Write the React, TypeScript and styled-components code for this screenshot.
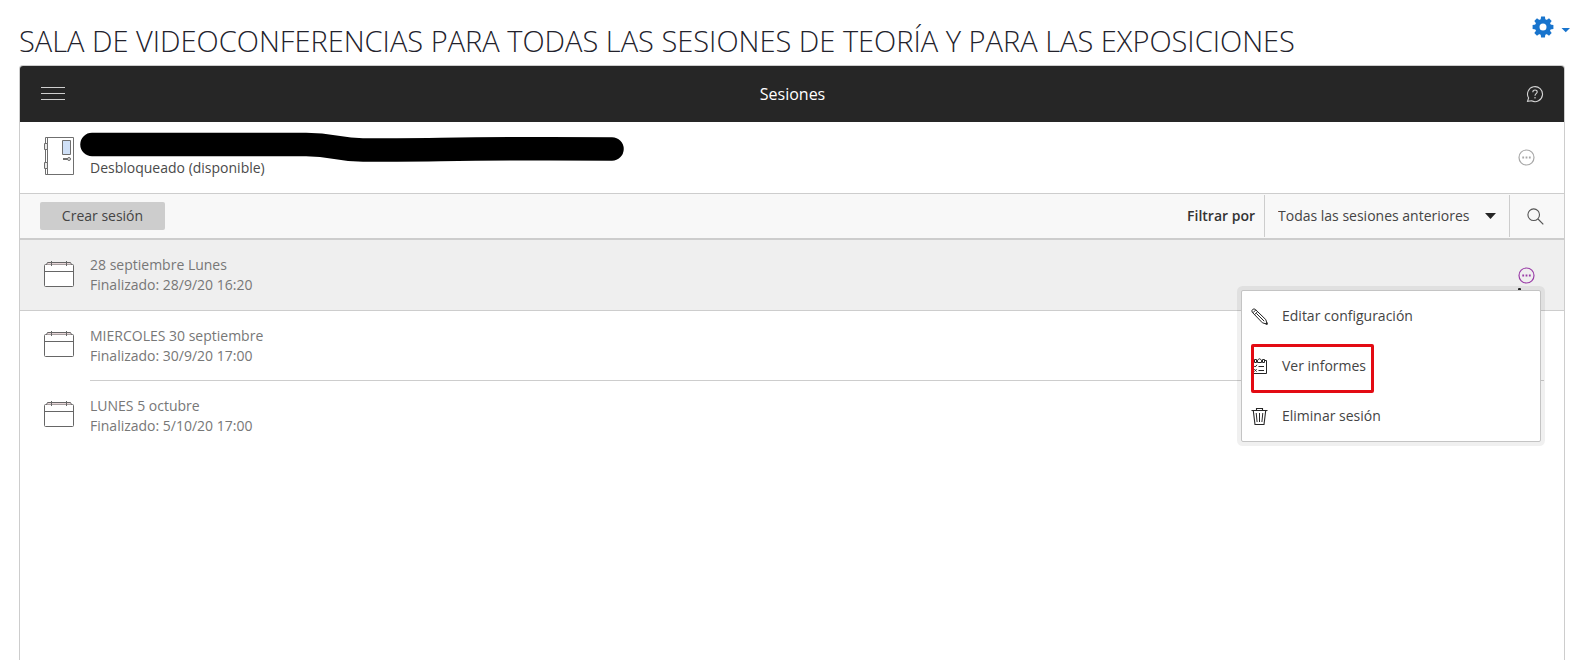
import React from "react";
import styled, { createGlobalStyle } from "styled-components";

const GlobalStyle = createGlobalStyle`
  * { box-sizing: border-box; }
  body {
    margin: 0;
    background: #fff;
    color: #262626;
    font: 14px/20px "Open Sans", "Noto Sans", sans-serif;
  }
  button, select { font: inherit; color: inherit; }
  svg { display: block; }
`;

const Page = styled.div`
  display: flex;
  flex-direction: column;
  min-height: 100vh;
`;

const PageHeader = styled.header`
  display: flex;
  justify-content: space-between;
  align-items: flex-start;
  padding: 16px 12px 4px 19px;
`;

const PageTitle = styled.h1`
  margin: 0;
  padding-top: 5px;
  font-size: 29px;
  line-height: 40px;
  font-weight: 300;
  color: #22222c;
`;

const IconButton = styled.button<{ $color?: string }>`
  display: flex;
  align-items: center;
  padding: 0;
  border: 0;
  background: none;
  color: ${(p) => p.$color || "#262626"};
  cursor: pointer;
`;

const Frame = styled.main`
  flex: 1;
  margin: 0 17px 0 19px;
  border: 1px solid #cdcdcd;
  border-bottom: 0;
  border-radius: 4px 4px 0 0;
`;

const TopBar = styled.div`
  display: grid;
  grid-template-columns: 1fr auto 1fr;
  align-items: center;
  height: 56px;
  padding: 0 20px 0 21px;
  border-radius: 3px 3px 0 0;
  background: #262626;
`;

const BarTitle = styled.h2`
  margin: 0;
  font-size: 16px;
  line-height: 24px;
  font-weight: 400;
  color: #fff;
`;

const EndButton = styled(IconButton)`
  justify-self: end;
`;

const Row = styled.div<{ $active?: boolean }>`
  display: flex;
  align-items: center;
  height: ${(p) => (p.$active ? 70 : 69)}px;
  padding: 0 29px 0 24px;
  background: ${(p) => (p.$active ? "#efefef" : "#fff")};
`;

const RoomRow = styled(Row)`
  height: 72px;
  border-bottom: 1px solid #cdcdcd;
`;

const RowIcon = styled.span`
  flex: none;
  width: 46px;
  padding-bottom: 3px;
`;

const RowText = styled.div<{ $muted?: boolean }>`
  flex: 1;
  color: ${(p) => (p.$muted ? "#777" : "#4a4a4a")};
`;

const RowLine = styled.p`
  margin: 0;
`;

const RoomText = styled(RowText)`
  align-self: flex-start;
  padding-top: 10px;
`;

const Redaction = styled.svg`
  width: 544px;
  height: 30px;
  margin: 0 0 -4px -10px;
`;

const Toolbar = styled.div`
  display: flex;
  align-items: center;
  height: 46px;
  padding-left: 20px;
  border-bottom: 2px solid #cdcdcd;
  background: #f8f8f8;
`;

const CreateButton = styled.button`
  height: 28px;
  width: 125px;
  margin-right: auto;
  padding: 0;
  border: 0;
  border-radius: 2px;
  background: #cdcdcd;
  color: #444;
  cursor: pointer;
`;

const FilterLabel = styled.label`
  margin-right: 9px;
  font-weight: 600;
  color: #333;
`;

const FilterBox = styled.span`
  display: flex;
  align-items: center;
  height: 42px;
  padding: 0 13px;
  border: solid #cdcdcd;
  border-width: 0 1px;
`;

const FilterSelect = styled.select`
  appearance: none;
  width: 207px;
  padding: 0;
  border: 0;
  background: none;
  color: #444;
`;

const SearchButton = styled(IconButton)`
  width: 54px;
  padding-left: 17px;
`;

const SessionList = styled.ul`
  margin: 0;
  padding: 0;
  list-style: none;
`;

const Session = styled.li<{ $divider: "full" | "inset" | "none" }>`
  position: relative;
  &::after {
    content: "";
    display: ${(p) => (p.$divider === "none" ? "none" : "block")};
    height: 1px;
    margin: ${(p) => (p.$divider === "inset" ? "0 20px 0 70px" : "0")};
    background: #cdcdcd;
  }
`;

const Menu = styled.div`
  position: absolute;
  z-index: 2;
  top: 50px;
  right: 23px;
  width: 300px;
  border: 1px solid #c4c4c4;
  border-radius: 2px;
  background: #fff;
  box-shadow: 0 0 0 4px rgba(0, 0, 0, 0.06);
  &::before {
    content: "";
    position: absolute;
    top: -3px;
    right: 19px;
    width: 3px;
    height: 2px;
    border-radius: 1px 1px 0 0;
    background: #262626;
  }
`;

const MenuItem = styled.button`
  display: flex;
  align-items: center;
  gap: 14px;
  width: 100%;
  height: 50px;
  padding: 0 9px;
  border: 0;
  background: none;
  color: #444;
  cursor: pointer;
`;

const Highlight = styled.span`
  position: absolute;
  top: 53px;
  left: 9px;
  width: 123px;
  height: 49px;
  border: 3px solid #e30b13;
  border-radius: 2px;
  pointer-events: none;
`;

const GearMenuIcon = () => (
  <svg width="38" height="22" viewBox="-11 -11 38 22" fill="currentColor">
    <path fillRule="evenodd" d="M0-8a8 8 0 1 0 0 16a8 8 0 1 0 0-16M0-3.5a3.5 3.5 0 1 1 0 7a3.5 3.5 0 1 1 0-7" />
    {[0, 45, 90, 135, 180, 225, 270, 315].map((a) => (
      <path key={a} transform={`rotate(${a})`} d="M-2.4-7L-1.9-10.4H1.9L2.4-7Z" />
    ))}
    <path d="M18.5 1H27L22.75 5.3Z" />
  </svg>
);

const MenuIcon = () => (
  <svg width="24" height="14" stroke="#cfcfcf">
    <path d="M0 .5H24M0 6.5H24M0 12.5H24" />
  </svg>
);

const HelpIcon = () => (
  <svg width="18" height="18" viewBox="0 0 18 18" fill="none" stroke="#d4d4d4" strokeWidth="1.1">
    <path d="M1.5 16.4L2.6 13A7.5 7.5 0 1 1 5.6 15.8Z" />
    <path d="M6.8 7.2C6.8 4.2 11.3 4.3 11.2 7C11.1 8.6 9 8.8 9 10.7M9 12V13.4" />
  </svg>
);

const DoorIcon = () => (
  <svg width="30" height="38" viewBox="0 0 30 38" fill="none" stroke="#6f6f6f">
    <path d="M1.5.5H29.5V37.5H1.5ZM3.5.5V37.5" />
    <path d="M.5 6.5H3.5V12.5H.5ZM.5 25.5H3.5V31.5H.5Z" fill="#e8e8e8" />
    <path d="M18.5 3.5H26.5V17.5H18.5Z" fill="#cfe0f7" />
    <path d="M19 22H24" strokeWidth="2" />
    <circle cx="25" cy="22" r="1.5" fill="#ddd" />
  </svg>
);

const CalendarIcon = () => (
  <svg width="30" height="26" viewBox="0 0 30 26" fill="none" stroke="#666">
    <rect x=".5" y="3.5" width="29" height="22" rx="1" fill="#fff" />
    <path d="M2.5 3.5L3.5 1.5H26.5L27.5 3.5" fill="#e6d5d7" />
    <path d="M.5 10.5H29.5M7.5 0V5M22.5 0V5" />
  </svg>
);

const MoreIcon = () => (
  <svg width="17" height="17" viewBox="0 0 17 17" fill="none" stroke="currentColor">
    <circle cx="8.5" cy="8.5" r="7.5" strokeWidth="1.2" />
    <path d="M4.3 8.5H6.1M7.6 8.5H9.4M10.9 8.5H12.7" strokeWidth="1.8" />
  </svg>
);

const SearchIcon = () => (
  <svg width="17" height="17" viewBox="0 0 17 17" fill="none" stroke="#555" strokeWidth="1.1">
    <circle cx="6.7" cy="6.7" r="5.8" />
    <path d="M11 11L16.3 16.3" />
  </svg>
);

const CaretIcon = () => (
  <svg width="11" height="6" fill="currentColor">
    <path d="M0 0H11L5.5 6Z" />
  </svg>
);

const PencilIcon = () => (
  <svg width="17" height="17" viewBox="0 0 17 17" fill="none" stroke="#262626">
    <path d="M1.3 4.3Q.2 2.7 1.6 1.5Q3 .3 4.3 1.4L14.8 11.6L16.2 16.2L11.4 14.8ZM1.9 4.8L4.8 1.9M3.7 6.5L6.6 3.7M5.4 5.4L13.2 13.2" />
    <path d="M14.6 15.9L16.2 16.2L15.9 14.6Z" fill="#262626" />
  </svg>
);

const ReportIcon = () => (
  <svg width="17" height="17" viewBox="0 0 17 17" fill="none" stroke="#262626">
    <path d="M3 2.5H1.5V15.5H15.5V2.5H14M5.5 2.5H6.5M10.5 2.5H11.5M3.5 1.5H5.5V4.5H3.5ZM11.5 1.5H13.5V4.5H11.5ZM6.5 4.5V2.5Q8.5-1 10.5 2.5V4.5ZM7.5 8.5H13M7.5 12.5H13M3 7.8L4.2 9L6 6.8M3.3 11.2L5.6 13.6M5.6 11.2L3.3 13.6" />
  </svg>
);

const TrashIcon = () => (
  <svg width="17" height="17" viewBox="0 0 17 17" fill="none" stroke="#262626">
    <path d="M.5 2.5H16.5M5.5 2.5V.5H11.5V2.5M2.3 2.8L4 16.5H13L14.7 2.8" strokeWidth="1.1" />
    <path d="M5.2 5L6.1 14M8.5 5V14M11.8 5L10.9 14" />
  </svg>
);

const sessions = [
  { name: "28 septiembre Lunes", ended: "Finalizado: 28/9/20 16:20", open: true },
  { name: "MIERCOLES 30 septiembre", ended: "Finalizado: 30/9/20 17:00", open: false },
  { name: "LUNES 5 octubre", ended: "Finalizado: 5/10/20 17:00", open: false },
];

const SessionMenu = () => (
  <Menu>
    <MenuItem><PencilIcon />Editar configuración</MenuItem>
    <MenuItem><ReportIcon />Ver informes</MenuItem>
    <MenuItem><TrashIcon />Eliminar sesión</MenuItem>
    <Highlight />
  </Menu>
);

export default function App() {
  return (
    <Page>
      <GlobalStyle />
      <PageHeader>
        <PageTitle>SALA DE VIDEOCONFERENCIAS PARA TODAS LAS SESIONES DE TEORÍA Y PARA LAS EXPOSICIONES</PageTitle>
        <IconButton $color="#1874cd" aria-label="Ajustes"><GearMenuIcon /></IconButton>
      </PageHeader>
      <Frame>
        <TopBar>
          <IconButton aria-label="Menú"><MenuIcon /></IconButton>
          <BarTitle>Sesiones</BarTitle>
          <EndButton aria-label="Ayuda"><HelpIcon /></EndButton>
        </TopBar>
        <RoomRow>
          <RowIcon><DoorIcon /></RowIcon>
          <RoomText>
            <Redaction viewBox="0 0 544 30">
              <path d="M12 12.5H226C255 12.5 257 18 283 18C360 18 400 16 532 17" fill="none" stroke="#000" strokeWidth="23.5" strokeLinecap="round" />
            </Redaction>
            <RowLine>Desbloqueado (disponible)</RowLine>
          </RoomText>
          <IconButton $color="#a8a8a8" aria-label="Opciones de la sala"><MoreIcon /></IconButton>
        </RoomRow>
        <Toolbar>
          <CreateButton>Crear sesión</CreateButton>
          <FilterLabel htmlFor="filter">Filtrar por</FilterLabel>
          <FilterBox>
            <FilterSelect id="filter"><option>Todas las sesiones anteriores</option></FilterSelect>
            <CaretIcon />
          </FilterBox>
          <SearchButton aria-label="Buscar"><SearchIcon /></SearchButton>
        </Toolbar>
        <SessionList>
          {sessions.map((s, i) => (
            <Session key={s.name} $divider={s.open ? "full" : i < sessions.length - 1 ? "inset" : "none"}>
              <Row $active={s.open}>
                <RowIcon><CalendarIcon /></RowIcon>
                <RowText $muted>
                  <RowLine>{s.name}</RowLine>
                  <RowLine>{s.ended}</RowLine>
                </RowText>
                {s.open && <IconButton $color="#9b3fa8" aria-label="Opciones de la sesión"><MoreIcon /></IconButton>}
              </Row>
              {s.open && <SessionMenu />}
            </Session>
          ))}
        </SessionList>
      </Frame>
    </Page>
  );
}
